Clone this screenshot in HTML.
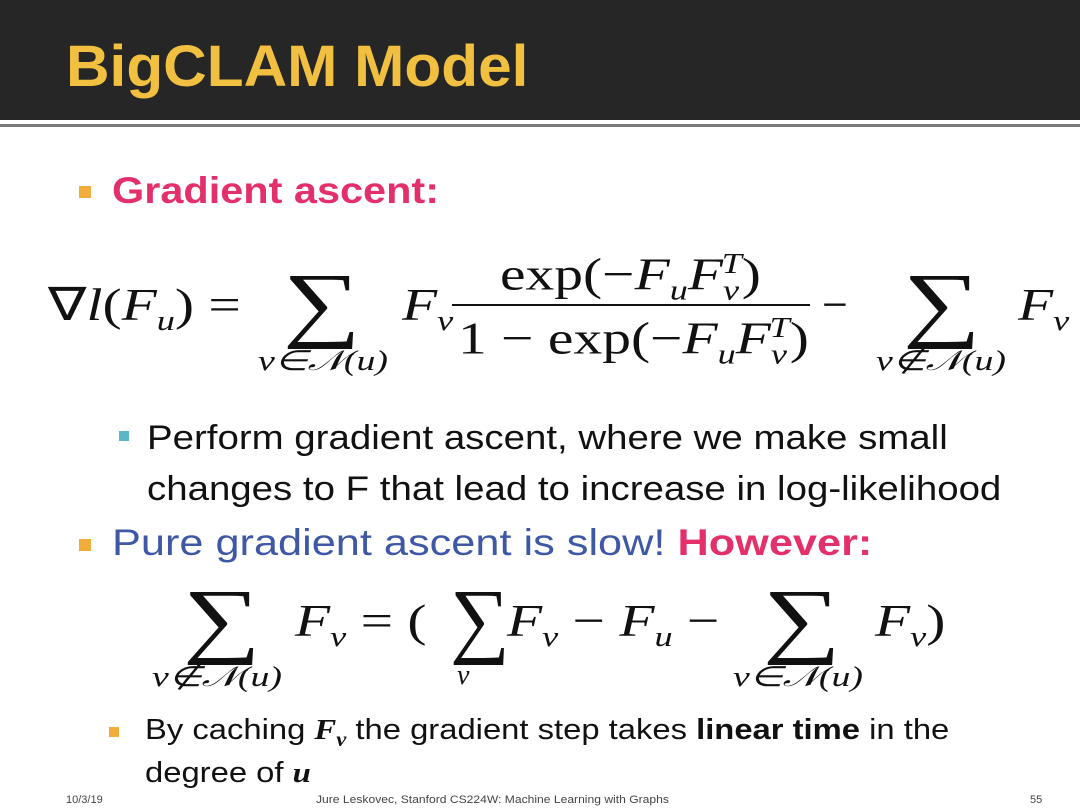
<!DOCTYPE html>
<html><head><meta charset="utf-8"><style>
body{margin:0;width:1080px;height:810px;position:relative;background:#fff;overflow:hidden;font-family:"Liberation Sans",sans-serif}
.a{position:absolute;white-space:nowrap;line-height:1;transform-origin:0 0}
.m{font-family:"Liberation Serif",serif;color:#111}
.i{font-style:italic}
.sq{position:absolute;width:12px;height:12px;background:#f0ad3c}
.s{transform:scaleX(1.3)}
.w{transform:scaleX(1.25)}
.l{transform:scaleX(1.35)}
</style></head><body>
<div style="position:absolute;left:0;top:0;width:1080px;height:120px;background:#262626"></div>
<div style="position:absolute;left:0;top:124px;width:1080px;height:3px;background:#7a7a7a"></div>
<div class="a" style="left:66px;top:38px;font-size:58px;font-weight:bold;color:#f2c040;transform:scaleX(1.04)">BigCLAM Model</div>

<div class="sq" style="left:79px;top:186px"></div>
<div class="a" style="left:112px;top:172px;font-size:37px;font-weight:bold;color:#e4306a;transform:scaleX(1.12)">Gradient ascent:</div>

<!-- formula 1 -->
<div class="a m w" style="left:48px;top:282px;font-size:46px">∇<span class="i">l</span>(<span class="i">F</span><sub class="i" style="font-size:29px">u</sub>) =</div>
<div class="a m s" style="left:283px;top:262px;font-size:84px">∑</div>
<div class="a m i l" style="left:258px;top:348px;font-size:28px">v∈𝒩(u)</div>
<div class="a m i w" style="left:402px;top:282px;font-size:46px">F<sub style="font-size:29px">v</sub></div>
<div class="a m w" style="left:500px;top:250px;font-size:46px">exp(−<i>F</i><sub class="i" style="font-size:29px">u</sub><i>F</i><sub class="i" style="font-size:29px">v</sub><sup class="i" style="font-size:29px;margin-left:-14px">T</sup>)</div>
<div style="position:absolute;left:452px;top:304px;width:358px;height:2px;background:#111"></div>
<div class="a m w" style="left:458px;top:314px;font-size:46px">1 − exp(−<i>F</i><sub class="i" style="font-size:29px">u</sub><i>F</i><sub class="i" style="font-size:29px">v</sub><sup class="i" style="font-size:29px;margin-left:-14px">T</sup>)</div>
<div class="a m" style="left:822px;top:282px;font-size:46px">−</div>
<div class="a m s" style="left:903px;top:262px;font-size:84px">∑</div>
<div class="a m i l" style="left:876px;top:348px;font-size:28px">v∉𝒩(u)</div>
<div class="a m i w" style="left:1018px;top:282px;font-size:46px">F<sub style="font-size:29px">v</sub></div>

<div class="sq" style="left:119px;top:431px;width:10px;height:10px;background:#5bb6c8"></div>
<div class="a" style="left:147px;top:421px;font-size:34px;color:#111;transform:scaleX(1.13)">Perform gradient ascent, where we make small</div>
<div class="a" style="left:147px;top:472px;font-size:34px;color:#111;transform:scaleX(1.13)">changes to F that lead to increase in log-likelihood</div>

<div class="sq" style="left:79px;top:539px"></div>
<div class="a" style="left:112px;top:524px;font-size:37px;color:#3f58a6;transform:scaleX(1.17)">Pure gradient ascent is slow! <b style="color:#e4306a">However:</b></div>

<!-- formula 2 -->
<div class="a m s" style="left:183px;top:578px;font-size:84px">∑</div>
<div class="a m i l" style="left:152px;top:664px;font-size:28px">v∉𝒩(u)</div>
<div class="a m w" style="left:295px;top:598px;font-size:46px"><i>F</i><sub class="i" style="font-size:29px">v</sub> = (</div>
<div class="a m" style="left:450px;top:578px;font-size:84px">∑</div>
<div class="a m i" style="left:457px;top:662px;font-size:28px">v</div>
<div class="a m w" style="left:507px;top:598px;font-size:46px"><i>F</i><sub class="i" style="font-size:29px">v</sub> − <i>F</i><sub class="i" style="font-size:29px">u</sub> −</div>
<div class="a m s" style="left:763px;top:578px;font-size:84px">∑</div>
<div class="a m i l" style="left:733px;top:664px;font-size:28px">v∈𝒩(u)</div>
<div class="a m w" style="left:875px;top:598px;font-size:46px"><i>F</i><sub class="i" style="font-size:29px">v</sub>)</div>

<div class="sq" style="left:109px;top:727px;width:10px;height:10px"></div>
<div class="a" style="left:145px;top:716px;font-size:29px;color:#111;transform:scaleX(1.13)">By caching <b class="m i">F<sub style="font-size:20px">v</sub></b> the gradient step takes <b>linear time</b> in the</div>
<div class="a" style="left:145px;top:759px;font-size:29px;color:#111;transform:scaleX(1.13)">degree of <b class="m i">u</b></div>

<div class="a" style="left:66px;top:795px;font-size:11px;color:#444">10/3/19</div>
<div class="a" style="left:316px;top:795px;font-size:11px;color:#444;transform:scaleX(1.1)">Jure Leskovec, Stanford CS224W: Machine Learning with Graphs</div>
<div class="a" style="left:1030px;top:795px;font-size:11px;color:#444">55</div>
</body></html>
